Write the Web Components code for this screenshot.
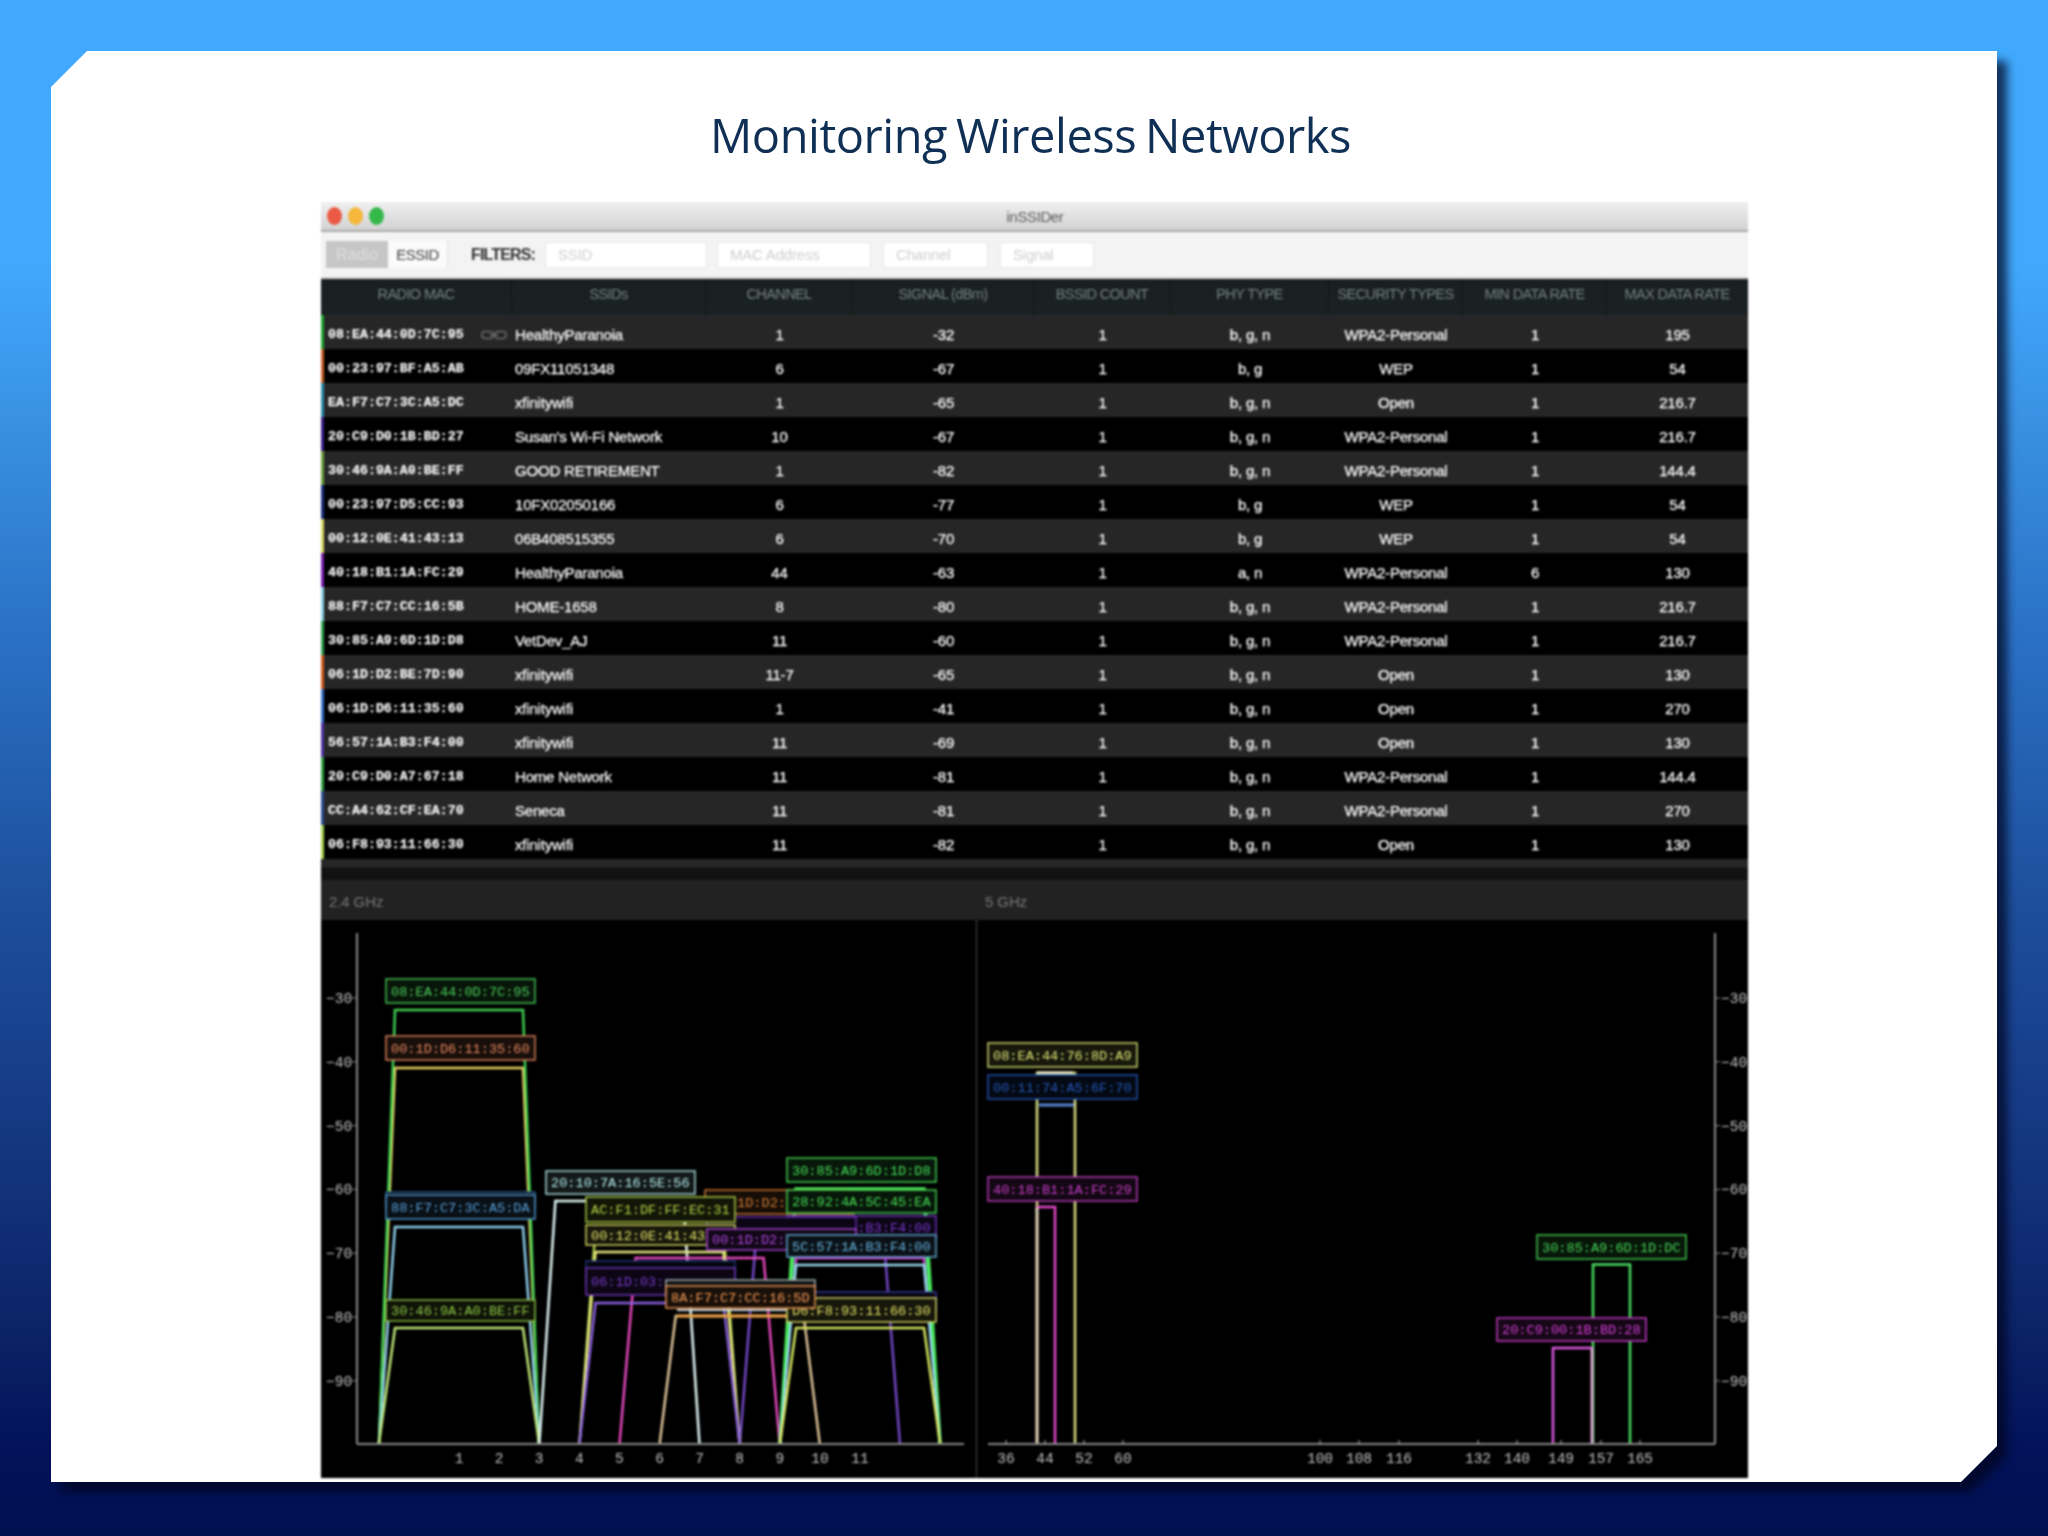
<!DOCTYPE html>
<html lang="en"><head><meta charset="utf-8"><title>Monitoring Wireless Networks</title>
<style>
html,body{margin:0;padding:0}
body{width:2048px;height:1536px;overflow:hidden;background:linear-gradient(180deg,#41a9fd 0,#41a9fd 260px,#3a94e6 400px,#2a70c4 640px,#1d4f9c 900px,#163b86 1100px,#0c2468 1320px,#03125a 1450px,#00104f 1536px)}
</style></head><body>
<slide-deck>
  <slide-title>Monitoring Wireless Networks</slide-title>
  <app-window></app-window>
</slide-deck>
<script>
const SANS='"Liberation Sans",Arial,sans-serif', MONO='"Liberation Mono","Courier New",monospace';
const def=(n,c)=>customElements.define(n,c);
class Base extends HTMLElement{
  constructor(){super();this.attachShadow({mode:'open'});}
}
def('slide-deck',class extends Base{constructor(){super();this.shadowRoot.innerHTML=`<style>
:host{display:block;padding:51px 0 0 51px;filter:drop-shadow(10px 10px 5px rgba(0,4,30,.72))}
.s{width:1946px;height:1431px;background:#fff;clip-path:polygon(36px 0,100% 0,100% calc(100% - 36px),calc(100% - 36px) 100%,0 100%,0 36px);display:flex;flex-direction:column;align-items:flex-start}
</style><div class="s"><slot></slot></div>`;}});
def('slide-title',class extends Base{constructor(){super();this.shadowRoot.innerHTML=`<style>
:host{display:block;width:100%;height:151px;box-sizing:border-box;padding-top:59px;text-align:center;font:400 47px/1.1 "Open Sans",sans-serif;color:#0f2f55;letter-spacing:-.45px;word-spacing:-3px;padding-left:13px}
</style><slot></slot>`;}});
def('app-window',class extends Base{constructor(){super();this.shadowRoot.innerHTML=`<style>
:host{display:flex;flex-direction:column;width:1427px;height:1276px;margin-left:270px;background:#000;filter:blur(.8px);font-family:${SANS}}
</style><title-bar></title-bar><filter-bar></filter-bar><net-table></net-table><spectrum-view></spectrum-view>`;}});
def('title-bar',class extends Base{constructor(){super();this.shadowRoot.innerHTML=`<style>
:host{display:flex;align-items:center;position:relative;height:30px;box-sizing:border-box;padding-left:6px;gap:6px;background:linear-gradient(#f0f0f0,#d2d2d2);border-bottom:2px solid #a9a9a9}
i{width:15px;height:18px;border-radius:50%}
b{flex:1;text-align:center;font:400 15px ${SANS};letter-spacing:-.4px;color:#5a5a5a;margin-right:68px}
</style><i style="background:#ec5a45"></i><i style="background:#f5b83c"></i><i style="background:#35b84a"></i><b>inSSIDer</b>`;}});
def('filter-bar',class extends Base{constructor(){super();this.shadowRoot.innerHTML=`<style>
:host{display:flex;align-items:center;height:47px;box-sizing:border-box;padding:0 0 0 5px;background:#f3f3f3;border-bottom:2px solid #cfcfcf;font:400 16px ${SANS}}
.tab{height:27px;display:flex;align-items:center;justify-content:center;box-sizing:border-box}
.r{width:62px;background:#c6c6c6;color:#dedede}
.e{width:60px;background:#fbfbfb;color:#3c3c3c;font-size:15px;letter-spacing:-.5px;border-right:1px solid #e2e2e2}
.f{margin:0 11px 0 23px;color:#303030;font-weight:700;font-size:16px;letter-spacing:-.85px;width:63px}
.i{height:26px;background:#fff;box-sizing:border-box;padding-left:12px;display:flex;align-items:center;color:#cfcfcf;font-size:15px;letter-spacing:-.2px;border:1px solid #e6e6e6;border-radius:2px}
</style><span class="tab r">Radio</span><span class="tab e">ESSID</span><span class="f">FILTERS:</span>
<span class="i" style="width:162px;margin-right:10px">SSID</span><span class="i" style="width:154px;margin-right:12px">MAC Address</span><span class="i" style="width:105px;margin-right:12px">Channel</span><span class="i" style="width:94px">Signal</span>`;}});
const COLS='191px 194px 147px 181px 137px 158px 134px 144px 141px';
const HEAD=['RADIO MAC','SSIDs','CHANNEL','SIGNAL (dBm)','BSSID COUNT','PHY TYPE','SECURITY TYPES','MIN DATA RATE','MAX DATA RATE'];
const P='WPA2-Personal',N='b, g, n',G='b, g';
const ROWS=[
['08:EA:44:0D:7C:95','HealthyParanoia','1','-32',N,P,'1','195','#1fa52e'],
['00:23:97:BF:A5:AB','09FX11051348','6','-67',G,'WEP','1','54','#c8622a'],
['EA:F7:C7:3C:A5:DC','xfinitywifi','1','-65',N,'Open','1','216.7','#2a8aa8'],
['20:C9:D0:1B:BD:27',"Susan's Wi-Fi Network",'10','-67',N,P,'1','216.7','#3a1e8a'],
['30:46:9A:A0:BE:FF','GOOD RETIREMENT','1','-82',N,P,'1','144.4','#6ca03a'],
['00:23:97:D5:CC:93','10FX02050166','6','-77',G,'WEP','1','54','#1a2f80'],
['00:12:0E:41:43:13','06B408515355','6','-70',G,'WEP','1','54','#d8d860'],
['40:18:B1:1A:FC:29','HealthyParanoia','44','-63','a, n',P,'6','130','#7a20b0'],
['88:F7:C7:CC:16:5B','HOME-1658','8','-80',N,P,'1','216.7','#8ad0e0'],
['30:85:A9:6D:1D:D8','VetDev_AJ','11','-60',N,P,'1','216.7','#2ea050'],
['06:1D:D2:BE:7D:90','xfinitywifi','11-7','-65',N,'Open','1','130','#d05a20'],
['06:1D:D6:11:35:60','xfinitywifi','1','-41',N,'Open','1','270','#3a70c8'],
['56:57:1A:B3:F4:00','xfinitywifi','11','-69',N,'Open','1','130','#5030a0'],
['20:C9:D0:A7:67:18','Home Network','11','-81',N,P,'1','144.4','#30a040'],
['CC:A4:62:CF:EA:70','Seneca','11','-81',N,P,'1','270','#2a4a90'],
['06:F8:93:11:66:30','xfinitywifi','11','-82',N,'Open','1','130','#a8d050']];
def('net-row',class extends Base{connectedCallback(){
  const d=JSON.parse(this.getAttribute('data')),i=+this.getAttribute('idx');
  const link=i==0?`<svg class="lk" width="26" height="10" viewBox="0 0 26 10" fill="none" stroke="#6a6a6a" stroke-width="1.5"><rect x="1" y="1.5" width="11" height="7" rx="3"/><rect x="14" y="1.5" width="11" height="7" rx="3"/><path d="M9 5h8"/></svg>`:'';
  this.shadowRoot.innerHTML=`<style>
:host{display:grid;grid-template-columns:${COLS};height:34px;align-items:center;background:${i%2?'#000':'#262626'};color:#fff;-webkit-text-stroke:.25px #fff;font:400 15px ${SANS};letter-spacing:-.2px;position:relative;box-sizing:border-box;padding-top:5px}
:host::before{content:"";position:absolute;left:0;top:0;bottom:0;width:3px;background:${d[8]}}
span{text-align:center;white-space:nowrap}
.m{text-align:left;padding-left:7px;font:700 13.3px ${MONO};letter-spacing:0;color:#f2f2f2;position:relative}
.s{text-align:left;padding-left:3px}
.lk{position:absolute;left:160px;top:3px}
</style><span class="m">${d[0]}${link}</span><span class="s">${d[1]}</span><span>${d[2]}</span><span>${d[3]}</span><span>1</span><span>${d[4]}</span><span>${d[5]}</span><span>${d[6]}</span><span>${d[7]}</span>`;
}});
def('net-table',class extends Base{constructor(){super();
  this.shadowRoot.innerHTML=`<style>
:host{display:block}
.h{display:grid;grid-template-columns:${COLS};height:36px;background:linear-gradient(#1a1f21,#1b2224);color:#75827f;font:400 14.5px ${SANS};letter-spacing:-.6px;align-items:center}
.h span{text-align:center;height:100%;line-height:30px;border-right:1px solid #121517;box-sizing:border-box}
.f{height:21px;background:linear-gradient(#262626 0,#262626 8px,#121212 9px,#121212 100%)}
</style><div class="h">${HEAD.map(t=>`<span>${t}</span>`).join('')}</div><div id="b"></div><div class="f"></div>`;
  const b=this.shadowRoot.getElementById('b');
  ROWS.forEach((r,i)=>{const e=document.createElement('net-row');e.setAttribute('idx',i);e.setAttribute('data',JSON.stringify(r));b.appendChild(e);});
}});
def('spectrum-view',class extends Base{constructor(){super();this.shadowRoot.innerHTML=`<style>
:host{display:grid;grid-template-columns:655px 1px 771px;grid-template-rows:40px 558px}
.b{background:#222;color:#777;font:400 15px ${SANS};letter-spacing:-.1px;display:flex;align-items:center;padding-left:8px;padding-top:2px;box-sizing:border-box}
.d{background:#222}.l{background:#444}
</style><div class="b">2.4 GHz</div><div class="d"></div><div class="b">5 GHz</div>
<spectrum-chart band="24"></spectrum-chart><div class="l"></div><spectrum-chart band="5"></spectrum-chart>`;}});
const yDb=d=>998+(-30-d)*6.38;
const xC=c=>459+(c-1)*40.1;
function trap(c,y,col,w=2.5){const x=xC(c),b=1443;return `<path d="M${x-80} ${b}L${x-64} ${y}H${x+64}L${x+80} ${b}" fill="none" stroke="${col}" stroke-width="${w}"/>`;}
function rect(x1,x2,y,col,w=2.5){return `<path d="M${x1} 1443V${y}H${x2}V1443" fill="none" stroke="${col}" stroke-width="${w}"/>`;}
function lab(txt,x,y,col,o={}){const W=o.w||149,H=o.h||24,tx=o.tx||x+5;
  return `<rect x="${x}" y="${y}" width="${W}" height="${H}" fill="#000"/><rect x="${x}" y="${y}" width="${W}" height="${H}" fill="${col}" fill-opacity=".1" stroke="${col}" stroke-opacity=".9" stroke-width="1.5"/>`+
  (txt?`<text x="${tx}" y="${y+H/2+4.5}" fill="${col}" font-family='"Liberation Mono",monospace' font-size="13.6">${txt}</text>`:'');}
const TX=(t,x,y,a='middle')=>`<text x="${x}" y="${y}" text-anchor="${a}" fill="#c4c4c4" font-family='"Liberation Mono",monospace' font-size="14.5">${t}</text>`;
function common(side){let s='';
  for(let d=-30;d>=-90;d-=10){const y=yDb(d);
    if(side=='l'){s+=TX(d,326,y+5,'start').replace('>-','>−')+`<path d="M352 ${y}H357" stroke="#888"/>`;}
    else{s+=`<path d="M1715 ${y}H1720" stroke="#888"/>`+TX(d,1721,y+5,'start').replace('>-','>−');}
  }return s;}
function left(){
 let s=`<path d="M357 933V1444M357 1444H964" stroke="#8a8a8a" stroke-width="2" fill="none"/>`;
 s+=trap(1,1068,'#e8d060')+trap(1,1010,'#3fd050')+trap(1,1227,'#8fd0ee')+trap(1,1328,'#c0e878')+
 trap(5,1201,'#e4f8f8')+trap(10,1240,'#7448c8')+trap(6,1229,'#a8c848')+trap(7,1258,'#e848c0')+trap(6,1252,'#e8e880')+trap(6,1303,'#8a60e0')+
 trap(8,1316,'#e0c498')+trap(11,1258,'#d040d0')+trap(11,1221,'#40e080')+trap(11,1189,'#48e858',3.5)+trap(11,1265,'#98d8f0')+trap(11,1328,'#d8e860');
 s+=`<path d="M735 1220H747" stroke="#e09030" stroke-width="2"/><path d="M677 1310H790" stroke="#c8d8d8" stroke-width="2"/><path d="M677 1316H790" stroke="#e8a040" stroke-width="3"/>`;
 for(let c=1;c<=11;c++) s+=TX(c,xC(c),1463);
 s+=lab('08:EA:44:0D:7C:95',386,979,'#4ad05c')+lab('00:1D:D6:11:35:60',386,1036,'#e88a62')+
    lab('',386,1192,'#2c5c88',{h:16})+lab('88:F7:C7:3C:A5:DA',386,1195,'#58a0d8',{h:24})+lab('30:46:9A:A0:BE:FF',386,1300,'#90c848',{h:21})+
    lab('20:10:7A:16:5E:56',546,1171,'#b8f0f0',{h:23})+
    lab('1D:D2:',705,1190,'#d88038',{h:24,tx:737})+
    lab('F4:47:1A:B3:F4:00',787,1216,'#7a38d0',{h:22})+
    lab('',707,1217,'#7030c0',{h:14})+
    lab('AC:F1:DF:FF:EC:31',586,1197,'#b8d848',{h:25})+
    lab('00:12:0E:41:43',586,1225,'#e4e468',{h:20})+
    lab('00:1D:D2:',707,1229,'#b048e0',{h:21})+
    lab('28:92:4A:5C:45:EA',787,1190,'#48e058',{h:23})+
    lab('30:85:A9:6D:1D:D8',787,1158,'#48e058',{h:24})+
    lab('5C:57:1A:B3:F4:00',787,1235,'#68b4e0',{h:22})+
    lab('',586,1261,'#243a80',{h:24})+
    lab('06:1D:03:',586,1268,'#7838c8',{h:27})+
    lab('',787,1292,'#3a3aa0',{h:20})+
    lab('D6:F8:93:11:66:30',787,1298,'#e4e468',{h:24})+
    lab('',666,1280,'#b0c0c0',{h:14})+
    lab('8A:F7:C7:CC:16:5D',666,1286,'#f89c58',{h:22});
 s+=common('l');return s;}
function right(){
 let s=`<path d="M1715 933V1444M988 1444H1715" stroke="#8a8a8a" stroke-width="2" fill="none"/>`;
 [[36,1006],[44,1045],[52,1084],[60,1123],[100,1320],[108,1359],[116,1399],[132,1478],[140,1517],[149,1561],[157,1601],[165,1640]].forEach(([t,x])=>{s+=TX(t,x,1463)+`<path d="M${x} 1440V1444" stroke="#bbb"/>`;});
 s+=rect(1037,1075,1073,'#dce084')+`<path d="M1037 1073H1073" stroke="#f4f8c8" stroke-width="3"/><path d="M1039 1105H1074" stroke="#5888d8" stroke-width="3"/>`+rect(1037,1055,1207,'#e848d0')+`<path d="M1037 1207V1443" stroke="#dcdcb4" stroke-width="2.5"/>`;
 s+=rect(1593,1630,1264.5,'#48e060')+rect(1553,1592,1348,'#e058e0')+`<path d="M1592 1348V1443" stroke="#dcacd0" stroke-width="2.5"/>`;
 s+=lab('08:EA:44:76:8D:A9',988,1043,'#e0e878')+lab('00:11:74:A5:6F:70',988,1075,'#2458b8')+lab('40:18:B1:1A:FC:29',988,1177,'#c840c8')+
    lab('30:85:A9:6D:1D:DC',1537,1235,'#48d858')+lab('20:C9:00:1B:BD:28',1497,1318,'#d840d8',{h:23});
 s+=common('r');return s;}
def('spectrum-chart',class extends Base{connectedCallback(){
  const l=this.getAttribute('band')=='24';
  const vb=l?'321 920 655 558':'977 920 771 558';
  const [,, w,h]=vb.split(' ');
  this.shadowRoot.innerHTML=`<style>:host{display:block;background:#000}svg{display:block}</style><svg width="${w}" height="${h}" viewBox="${vb}">${l?left():right()}</svg>`;
}});
</script>
</body></html>
